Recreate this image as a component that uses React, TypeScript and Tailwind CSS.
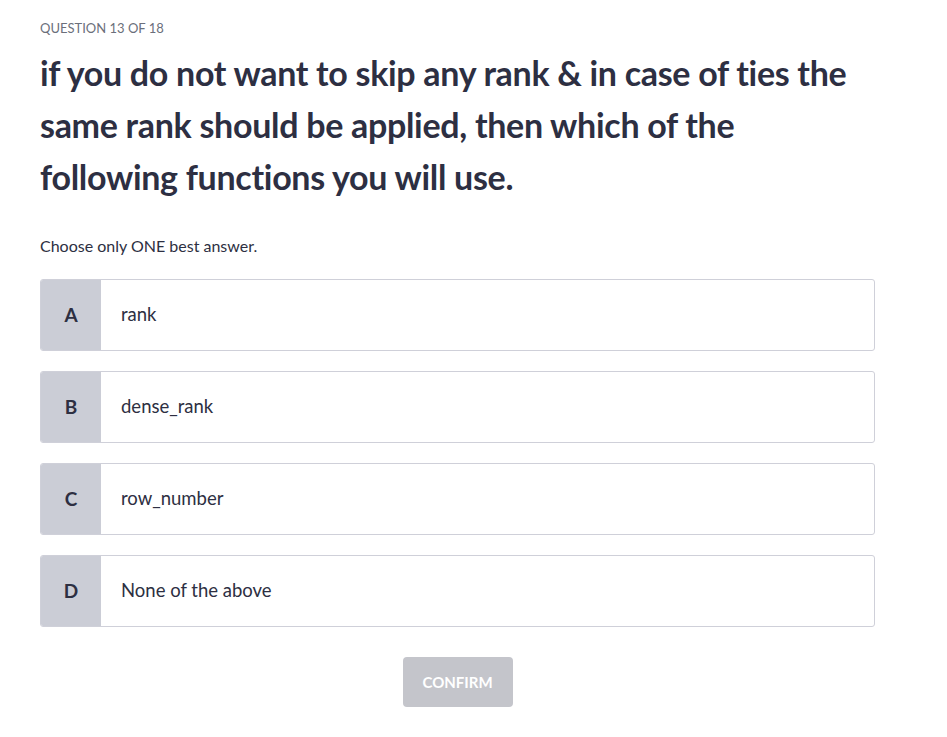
import React, { useState } from "react";

const options = [
  { key: "A", label: "rank" },
  { key: "B", label: "dense_rank" },
  { key: "C", label: "row_number" },
  { key: "D", label: "None of the above" },
];

export default function App() {
  const [selected, setSelected] = useState<string | null>(null);

  return (
    <div className="min-h-screen bg-white font-['Lato','Liberation_Sans',sans-serif] text-[#2d2f42]">
      <div className="w-[835px] ml-[40px] pt-[19px]">
        <div className="text-[13px] leading-[18px] text-[#6b6f7b] uppercase">Question 13 of 18</div>

        <h1 className="mt-[10px] text-[34px] leading-[52px] font-bold tracking-[-0.3px] text-[#2d2f42]">
          if you do not want to skip any rank &amp; in case of ties the same rank should be applied, then which of the
          following functions you will use.
        </h1>

        <p className="mt-[33px] text-[16px] leading-[20px] text-[#2d2f42]">Choose only ONE best answer.</p>

        {/* answer choices */}
        <div className="mt-[23px] flex flex-col gap-[20px]">
          {options.map((o) => (
            <button
              key={o.key}
              onClick={() => setSelected(o.key)}
              className={
                "flex h-[72px] w-full text-left rounded-[3px] border overflow-hidden cursor-pointer " +
                (selected === o.key ? "border-[#5a5fd6]" : "border-[#cfd0d9]")
              }
            >
              <span className="w-[60px] shrink-0 bg-[#cbcdd6] flex items-center justify-center text-[19px] font-bold text-[#2d2f42]">
                {o.key}
              </span>
              <span className="flex items-center pl-[20px] text-[18.5px] text-[#2d2f42]">{o.label}</span>
            </button>
          ))}
        </div>

        <div className="mt-[30px] flex justify-center">
          <button
            disabled={!selected}
            className="h-[50px] w-[110px] rounded-[4px] bg-[#c4c5cb] text-white text-[15px] font-bold uppercase"
          >
            Confirm
          </button>
        </div>
      </div>
    </div>
  );
}
